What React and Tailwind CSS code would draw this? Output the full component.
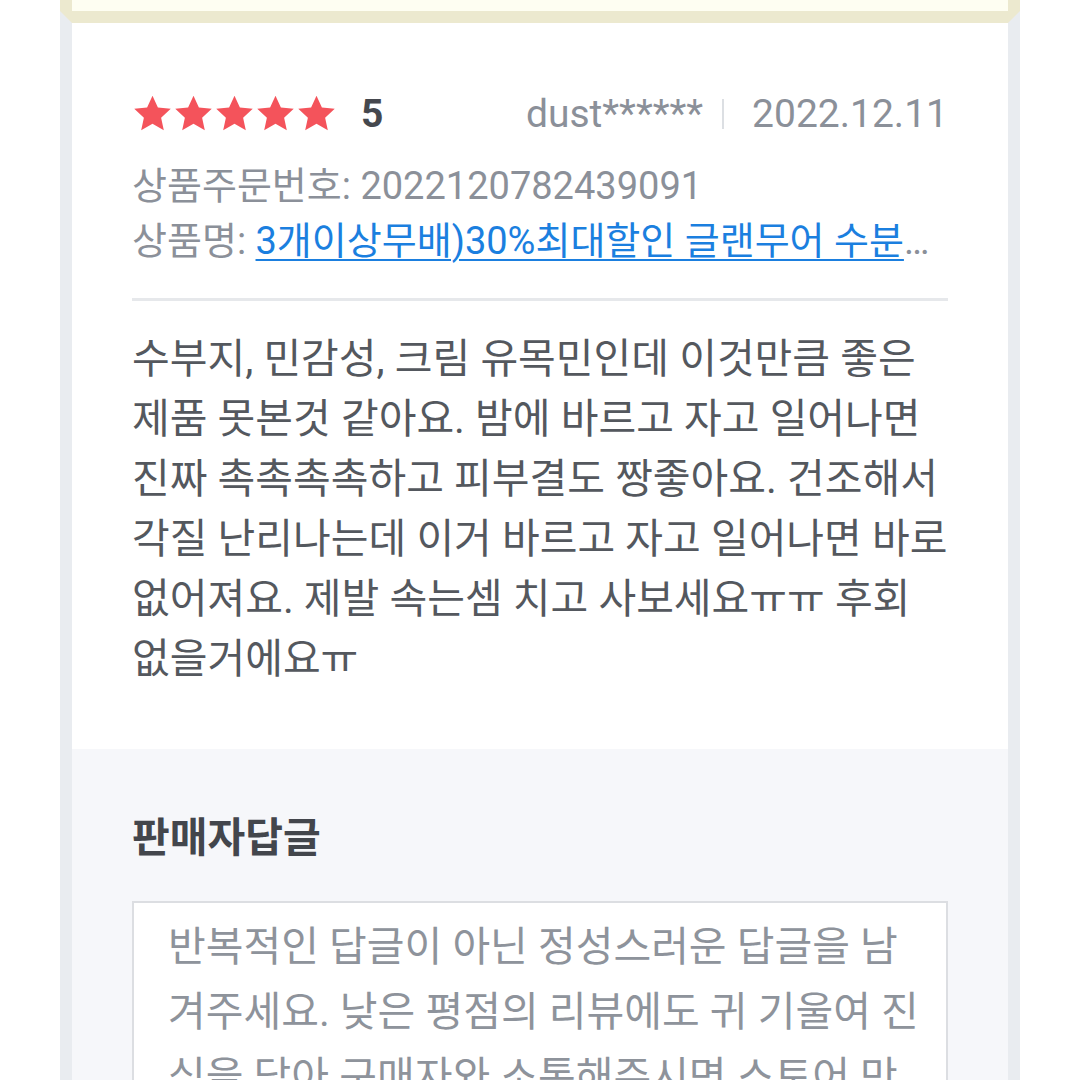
import { Fragment } from 'react'

const font = { fontFamily: "Roboto, 'Noto Sans CJK KR', sans-serif" }

const REVIEW_LINES = [
  '수부지, 민감성, 크림 유목민인데 이것만큼 좋은',
  '제품 못본것 같아요. 밤에 바르고 자고 일어나면',
  '진짜 촉촉촉촉하고 피부결도 짱좋아요. 건조해서',
  '각질 난리나는데 이거 바르고 자고 일어나면 바로',
  '없어져요. 제발 속는셈 치고 사보세요ㅠㅠ 후회',
  '없을거에요ㅠ',
]

const PLACEHOLDER_LINES = [
  '반복적인 답글이 아닌 정성스러운 답글을 남',
  '겨주세요. 낮은 평점의 리뷰에도 귀 기울여 진',
  '심을 담아 구매자와 소통해주시면 스토어 만',
]

function Star() {
  return (
    <svg width="41" height="38" viewBox="0 0 24 22.5" className="shrink-0">
      <path d="M12 0.4l3.2 7 7.6.8-5.7 5.2 1.6 7.5L12 17l-6.7 3.9 1.6-7.5-5.7-5.2 7.6-.8z" fill="#f4535b" />
    </svg>
  )
}

export default function App() {
  return (
    <div className="min-h-screen bg-white" style={font}>
      <div className="mx-[60px]">
        {/* previous (yellow) box, only its bottom edge is visible */}
        <div className="h-[11px] bg-[#fefef2] border-x-[12px] border-[#ece9cf]" />

        <div className="border-t-[12px] border-x-[12px] border-t-[#ece9cf] border-x-[#e9ecf0]">
          {/* Review card */}
          <div className="bg-white px-[60px] pt-[68px] pb-[60px]">
            <div className="flex items-center h-[46px]">
              <div className="flex">
                {[0, 1, 2, 3, 4].map(i => <Star key={i} />)}
              </div>
              <span className="ml-[24px] text-[39px] font-bold text-[#45484e] leading-none">5</span>
              <div className="ml-auto flex items-center text-[39px] text-[#8b9099] leading-none">
                <span>dust******</span>
                <span className="ml-[19px] mr-[28px] w-[2px] h-[30px] bg-[#dcdfe3]" />
                <span>2022.12.11</span>
              </div>
            </div>

            <div className="mt-[22px] text-[38px] leading-[55px] text-[#8b9099]">
              <p className="whitespace-nowrap">상품주문번호: 2022120782439091</p>
              <p className="whitespace-nowrap overflow-hidden text-ellipsis">
                상품명: <span className="text-[#1b7fdf] underline decoration-2 underline-offset-[5px]">3개이상무배)30%최대할인 글랜무어 수분크림 대용량 보습크림 100ml</span>
              </p>
            </div>

            <div className="mt-[29px] h-[3px] bg-[#e6e8eb]" />

            <div className="mt-[28px] text-[41px] leading-[60px] text-[#54585e]">
              {REVIEW_LINES.map((line, i) => (
                <p key={i} className="whitespace-nowrap">{line}</p>
              ))}
            </div>
          </div>

          {/* Seller reply */}
          <div className="bg-[#f6f7fa] px-[60px] pt-[66px] pb-[60px]">
            <h3 className="text-[41px] leading-[46px] font-bold text-[#43464c]">판매자답글</h3>
            <div className="mt-[40px] border-2 border-[#dcdee2] bg-white pl-[34px] pr-[20px] pt-[12px] pb-[30px] h-[260px] overflow-hidden">
              {PLACEHOLDER_LINES.map((line, i) => (
                <Fragment key={i}>
                  <p className="whitespace-nowrap text-[41px] leading-[65px] text-[#8e939b]">{line}</p>
                </Fragment>
              ))}
            </div>
          </div>
        </div>
      </div>
    </div>
  )
}
